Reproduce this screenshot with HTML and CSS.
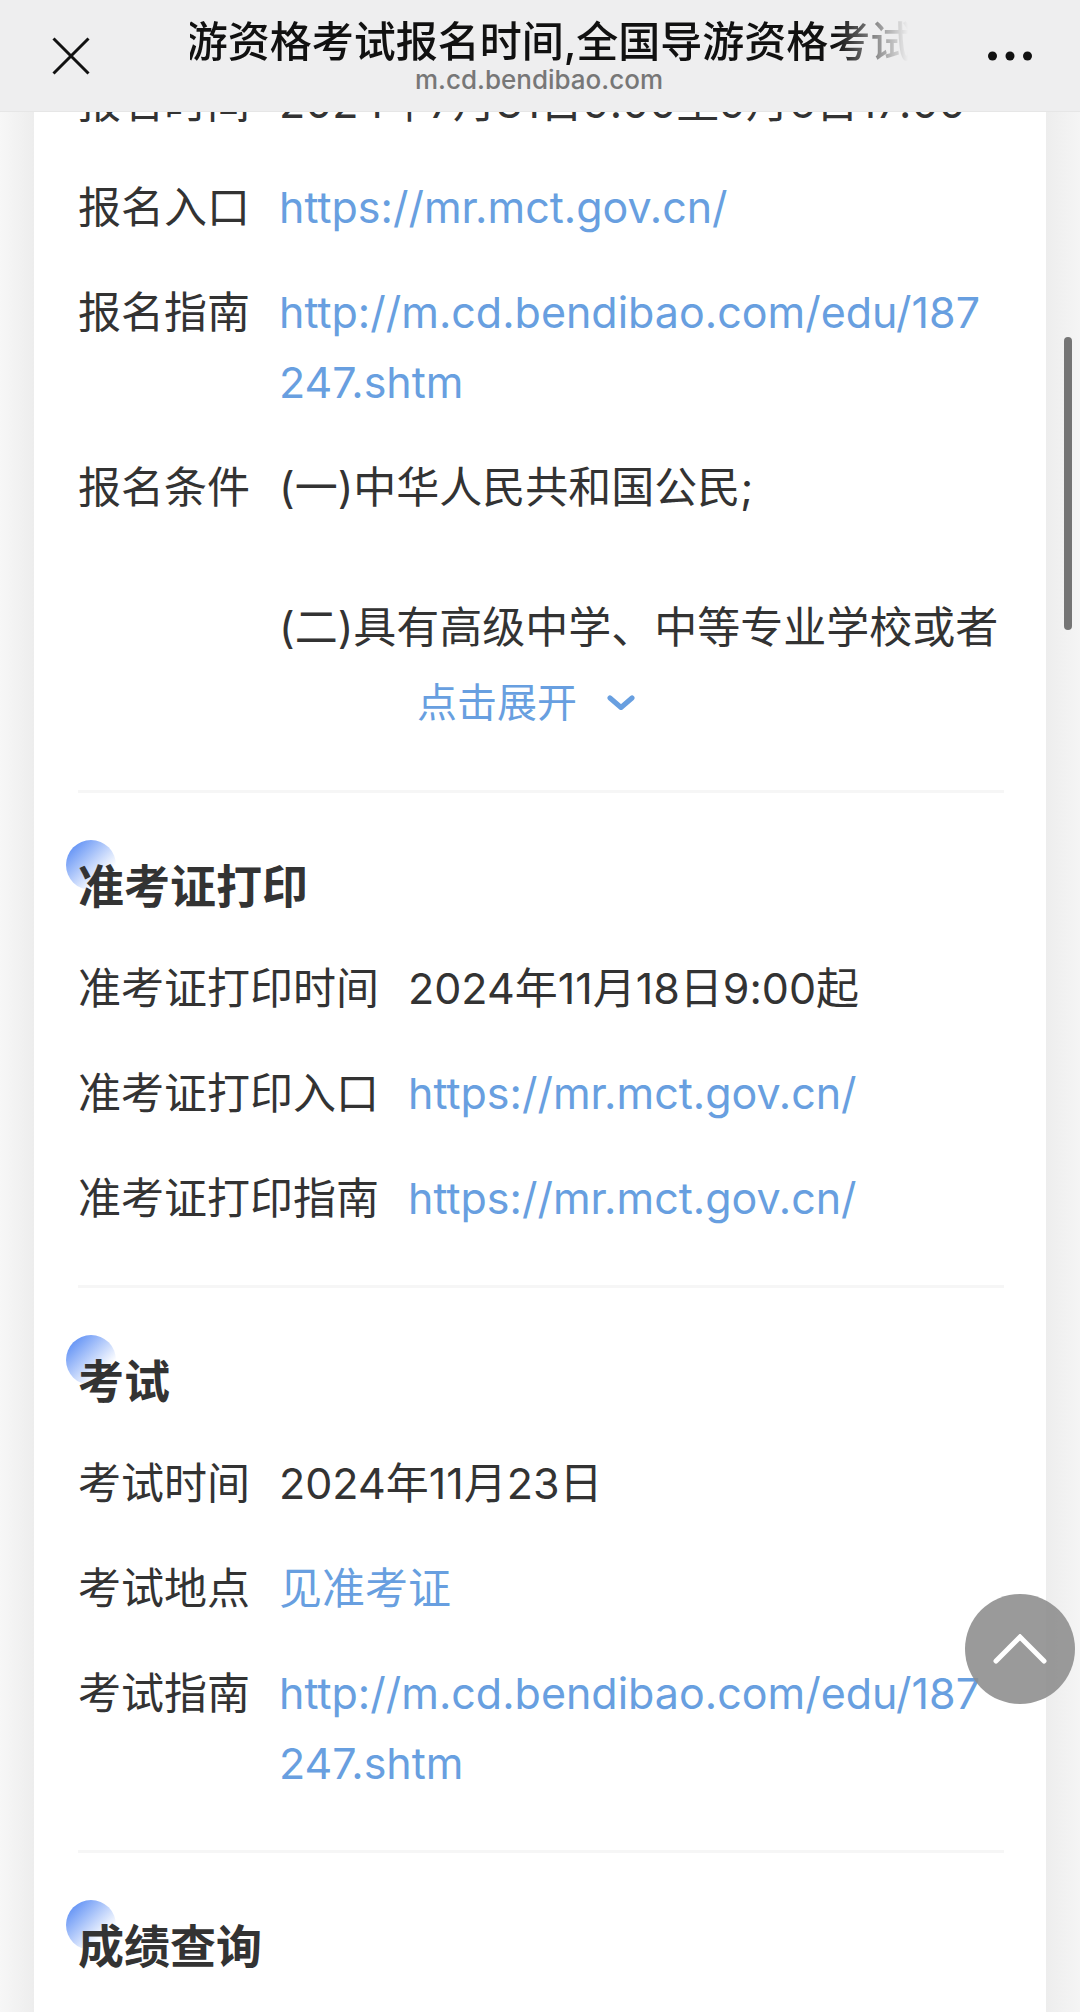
FILE: index.html
```html
<!DOCTYPE html>
<html lang="zh-CN">
<head>
  <meta charset="UTF-8" />
  <meta name="viewport" content="width=device-width, initial-scale=1.0" />
  <title>全国导游资格考试报名时间</title>
  <link rel="stylesheet" href="styles.css">
</head>
<body>
  <header class="topbar">
    <button class="icon-btn" type="button" aria-label="关闭">
      <svg width="38" height="38" viewBox="0 0 38 38" fill="none" stroke="#111" stroke-width="3"><path d="M1.500 1.500l35 35M36.500 1.500l-35 35"/></svg>
    </button>
    <div class="topbar-text">
      <div class="page-title"><span>游资格考试报名时间,全国导游资格考试</span></div>
      <div class="page-host">m.cd.bendibao.com</div>
    </div>
    <button class="icon-btn" type="button" aria-label="更多">
      <svg width="44" height="10" viewBox="0 0 44 10" fill="#111"><circle cx="4.500" cy="5" r="4.500"/><circle cx="22" cy="5" r="4.500"/><circle cx="39.500" cy="5" r="4.500"/></svg>
    </button>
  </header>

  <main class="card">
    <section class="section">
      <div class="row">
        <span class="label">报名时间</span>
        <div class="value">2024年7月31日9:00至9月6日17:00</div>
      </div>
      <div class="row">
        <span class="label">报名入口</span>
        <div class="value"><a href="https://mr.mct.gov.cn/">https://mr.mct.gov.cn/</a></div>
      </div>
      <div class="row">
        <span class="label">报名指南</span>
        <div class="value"><a href="http://m.cd.bendibao.com/edu/187247.shtm">http://m.cd.bendibao.com/edu/187247.shtm</a></div>
      </div>
      <div class="fold">
        <div class="row">
          <span class="label">报名条件</span>
          <div class="value">
            <p>(一)中华人民共和国公民;</p>
            <p>(二)具有高级中学、中等专业学校或者</p>
          </div>
        </div>
        <button class="expand" type="button">
          点击展开
          <svg width="28" height="16" viewBox="0 0 28 16" fill="none" stroke="#689fe0" stroke-width="5" stroke-linecap="round" stroke-linejoin="round"><path d="M3 3l11 9.500L25 3"/></svg>
        </button>
      </div>
    </section>

    <section class="section">
      <h2>准考证打印</h2>
      <div class="row">
        <span class="label">准考证打印时间</span>
        <div class="value">2024年11月18日9:00起</div>
      </div>
      <div class="row">
        <span class="label">准考证打印入口</span>
        <div class="value"><a href="https://mr.mct.gov.cn/">https://mr.mct.gov.cn/</a></div>
      </div>
      <div class="row">
        <span class="label">准考证打印指南</span>
        <div class="value"><a href="https://mr.mct.gov.cn/">https://mr.mct.gov.cn/</a></div>
      </div>
    </section>

    <section class="section">
      <h2>考试</h2>
      <div class="row">
        <span class="label">考试时间</span>
        <div class="value">2024年11月23日</div>
      </div>
      <div class="row">
        <span class="label">考试地点</span>
        <div class="value"><a href="#">见准考证</a></div>
      </div>
      <div class="row">
        <span class="label">考试指南</span>
        <div class="value"><a href="http://m.cd.bendibao.com/edu/187247.shtm">http://m.cd.bendibao.com/edu/187247.shtm</a></div>
      </div>
    </section>

    <section class="section">
      <h2>成绩查询</h2>
    </section>
  </main>

  <div class="scroll-thumb"></div>
  <button class="to-top" type="button" aria-label="返回顶部">
    <svg width="54" height="30" viewBox="0 0 54 30" fill="none" stroke="#fff" stroke-width="5" stroke-linecap="round"><path d="M3 27L27 3l24 24"/></svg>
  </button>
</body>
</html>
```
FILE: styles.css
```css
* {
  box-sizing: border-box;
}
body {
  margin: 0;
  padding: 0 34px;
  background: linear-gradient(to right, #f7f7f7, #ededed 34px, #ededed calc(100% - 34px), #f5f5f5);
  color: #333;
  font-family: Inter, "Noto Sans CJK SC", sans-serif;
  font-size: 43px;
  font-variant-ligatures: no-contextual;
  line-height: 70px;
}
button {
  border: 0;
  padding: 0;
  background: none;
  font: inherit;
  cursor: pointer;
}
svg {
  display: block;
}
a {
  color: #689fe0;
  text-decoration: none;
}
p {
  margin: 0;
}

.topbar {
  position: fixed;
  top: 0;
  left: 0;
  right: 0;
  z-index: 2;
  height: 112px;
  padding: 0 48px 0 49px;
  display: flex;
  align-items: center;
  background: #eeeeef;
  border-bottom: 1px solid #e6e6e6;
}
.icon-btn {
  flex: none;
  width: 44px;
  height: 44px;
  display: flex;
  align-items: center;
  justify-content: center;
}
.topbar-text {
  flex: 1;
  min-width: 0;
  margin: 0 80px 0 97px;
  padding-bottom: 4px;
  text-align: center;
}
.page-title {
  display: flex;
  justify-content: center;
  overflow: hidden;
  white-space: nowrap;
  color: #111;
  font-size: 42px;
  font-weight: 500;
  line-height: 52px;
  -webkit-mask-image: linear-gradient(to right, #000 90%, transparent);
  mask-image: linear-gradient(to right, #000 90%, transparent);
}
.page-host {
  padding-right: 20px;
  color: #777;
  font-size: 26px;
  font-weight: 500;
  line-height: 24px;
}

.card {
  min-height: 100vh;
  padding: 6px 42px 0 44px;
  background: #fff;
}
.section {
  display: flex;
  flex-direction: column;
  gap: 35px;
  padding: 61px 0 52px;
  border-bottom: 3px solid #f6f6f6;
}
.section:last-child {
  padding-bottom: 0;
  border-bottom: 0;
}
h2 {
  position: relative;
  z-index: 0;
  margin: 0;
  font-size: 46px;
  font-weight: 700;
  line-height: 64px;
}
h2::before {
  content: "";
  position: absolute;
  z-index: -1;
  top: -14px;
  left: -12px;
  width: 50px;
  height: 50px;
  border-radius: 50%;
  background: linear-gradient(135deg, #5f90f5 10%, #fff 75%);
}
.row {
  display: flex;
  gap: 29px;
}
.label {
  flex: none;
}
.value {
  flex: 1;
  word-break: break-all;
}
.value p + p {
  margin-top: 70px;
}
.expand {
  display: flex;
  align-items: center;
  justify-content: center;
  gap: 30px;
  width: 100%;
  margin-top: 6px;
  padding-right: 30px;
  color: #689fe0;
  font-size: 40px;
  line-height: 70px;
}

.scroll-thumb {
  position: fixed;
  top: 337px;
  right: 8px;
  width: 8px;
  height: 293px;
  border-radius: 4px;
  background: #757575;
}
.to-top {
  position: fixed;
  right: 5px;
  bottom: 308px;
  width: 110px;
  height: 110px;
  display: flex;
  align-items: center;
  justify-content: center;
  border-radius: 50%;
  background: rgba(140, 140, 140, 0.88);
}
```
